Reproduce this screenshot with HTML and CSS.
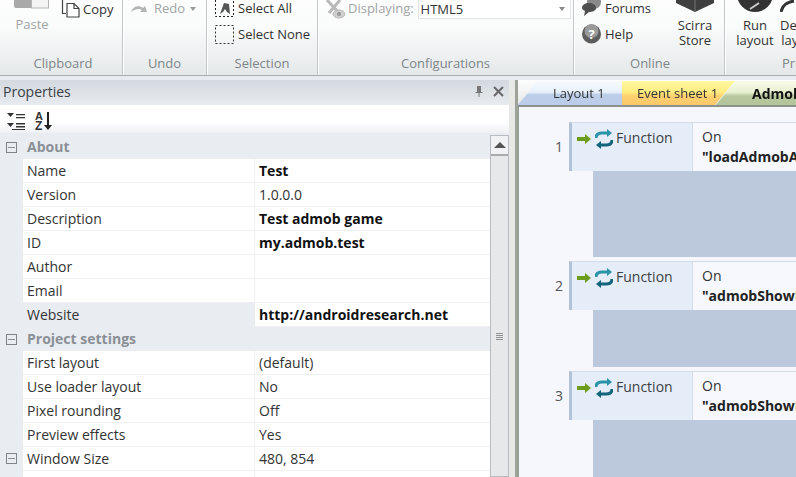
FILE: index.html
```html
<!DOCTYPE html>
<html lang="en">
<head>
<meta charset="utf-8">
<title>Construct 2</title>
<link rel="stylesheet" href="styles.css">
</head>
<body>
<div class="app">
  <header class="ribbon">
    <section class="group g-clip">
      <div class="tools clip-tools">
        <div class="paste">
          <svg class="paste-ico" width="36" height="9" viewBox="0 0 36 9"><rect x="0" y="-6" width="20" height="14" rx="2" fill="#a9a9a9"/><rect x="17.500" y="-6" width="17" height="14" fill="#f4f4f4" stroke="#b5b5b5"/></svg>
          <span class="muted">Paste</span>
        </div>
        <div class="copy">
          <svg width="19" height="18" viewBox="0 0 19 18" fill="none" stroke="#444" stroke-width="1.200"><path d="M5 -2H1.500V13.500H5"/><path d="M6 3.500H13L18 8.500V17H6Z" fill="#fff"/><path d="M13 3.500V8.500H18"/></svg>
          <span>Copy</span>
        </div>
      </div>
      <div class="glabel">Clipboard</div>
    </section>
    <section class="group g-undo">
      <div class="tools redo">
        <svg width="20" height="10" viewBox="0 0 20 10"><path d="M1 9c2-6 8-7 12-4l2-2 2 6h-7l2-2c-3-2-7-1-11 2z" fill="#b3b3b3"/></svg>
        <span class="muted">Redo</span>
        <i class="caret"></i>
      </div>
      <div class="glabel">Undo</div>
    </section>
    <section class="group g-sel">
      <div class="tools sel-tools">
        <div class="line-item">
          <svg class="sel-all-ico" width="21" height="18" viewBox="0 0 21 18"><path d="M1.500 0v16.500h18V0" fill="none" stroke="#222" stroke-dasharray="2 2"/><path d="M6 14l4-11 5 1 1 10-3-2-2-3-2 3z" fill="#555"/></svg>
          <span>Select All</span>
        </div>
        <div class="line-item">
          <svg width="21" height="20" viewBox="0 0 21 20"><rect x="1.500" y="1.500" width="18" height="18" fill="none" stroke="#333" stroke-dasharray="2 2"/></svg>
          <span>Select None</span>
        </div>
      </div>
      <div class="glabel">Selection</div>
    </section>
    <section class="group g-conf">
      <div class="tools conf-tools">
        <svg width="21" height="20" viewBox="0 0 21 20" fill="none" stroke="#b9b9b9" stroke-width="3"><path d="M2 0l13 14M15 0L4 13"/><ellipse cx="14" cy="14" rx="6" ry="4" fill="#cfcfcf" stroke-width="1"/><circle cx="14" cy="14" r="2" fill="#999" stroke="none"/></svg>
        <span class="muted disp">Displaying:</span>
        <div class="select"><span>HTML5</span><i class="caret"></i></div>
      </div>
      <div class="glabel">Configurations</div>
    </section>
    <section class="group g-online">
      <div class="tools online-tools">
        <div class="online-col">
          <div class="line-item">
            <svg width="21" height="18" viewBox="0 0 21 18"><circle cx="13" cy="3" r="7" fill="#8a8a8a"/><path d="M1 9c0-3 3-5 7-5s7 2 7 5-4 4-7 4l-5 4 1-5c-2-1-3-2-3-3z" fill="#4f4f4f"/></svg>
            <span>Forums</span>
          </div>
          <div class="line-item">
            <svg width="21" height="20" viewBox="0 0 21 20"><circle cx="10.500" cy="10" r="9.500" fill="#5d5d5d"/><circle cx="10.500" cy="7" r="7" fill="#9a9a9a"/><text x="10.500" y="15" text-anchor="middle" class="qmark">?</text></svg>
            <span>Help</span>
          </div>
        </div>
        <div class="big-btn store">
          <svg width="38" height="12" viewBox="0 0 38 12"><path d="M0 -4h38v7L19 12 0 3z" fill="#3f3f3f"/><path d="M19 0v12" stroke="#777"/></svg>
          <span>Scirra<br>Store</span>
        </div>
      </div>
      <div class="glabel">Online</div>
    </section>
    <section class="group g-prev">
      <div class="tools prev-tools">
        <div class="big-btn run">
          <svg width="36" height="12" viewBox="0 0 36 12"><circle cx="18" cy="-6" r="18" fill="#333"/><path d="M13 9l9-6" stroke="#ccc" stroke-width="2"/></svg>
          <span>Run<br>layout</span>
        </div>
        <div class="big-btn debug">
          <svg width="20" height="12" viewBox="0 0 20 12"><path d="M1 12C2 6 7 2 14 1" fill="none" stroke="#333" stroke-width="3"/></svg>
          <span>Debug<br>layout</span>
        </div>
      </div>
      <div class="glabel glabel-prev">Preview</div>
    </section>
  </header>

  <main class="main">
    <aside class="props">
      <div class="props-head">
        <span>Properties</span>
        <div class="head-icons">
          <svg width="10" height="11" viewBox="0 0 10 11" fill="#777"><path d="M3 0h4v6h1.500v1H5.500v4h-1V7H1.500V6H3z"/></svg>
          <svg width="11" height="11" viewBox="0 0 11 11" stroke="#666" stroke-width="2"><path d="M1 1l9 9M10 1l-9 9"/></svg>
        </div>
      </div>
      <div class="props-tools">
        <svg width="20" height="18" viewBox="0 0 20 18" fill="#333"><path d="M1 1h7L4.500 5zM1 11h7l-3.500 4z"/><path d="M10 2h9v1.200h-9zM10 5h9v1.200h-9zM10 11h9v1.500h-9zM10 14h9v1.500h-9zM6 17h13v1H6z"/></svg>
        <svg class="az" width="18" height="18" viewBox="0 0 18 18"><text x="0" y="8" class="az-a">A</text><text x="0" y="18" class="az-z">Z</text><path d="M12 0h2v13h3l-4 5-4-5h3z" fill="#222"/></svg>
      </div>
      <div class="grid-wrap">
        <div class="grid">
          <div class="cat"><i class="exp"></i><b>About</b></div>
          <div class="row"><div class="k">Name</div><div class="v"><b>Test</b></div></div>
          <div class="row"><div class="k">Version</div><div class="v">1.0.0.0</div></div>
          <div class="row"><div class="k">Description</div><div class="v"><b>Test admob game</b></div></div>
          <div class="row"><div class="k">ID</div><div class="v"><b>my.admob.test</b></div></div>
          <div class="row"><div class="k">Author</div><div class="v"></div></div>
          <div class="row"><div class="k">Email</div><div class="v"></div></div>
          <div class="row sel"><div class="k">Website</div><div class="v"><b>http://androidresearch.net</b></div></div>
          <div class="cat"><i class="exp"></i><b>Project settings</b></div>
          <div class="row"><div class="k">First layout</div><div class="v">(default)</div></div>
          <div class="row"><div class="k">Use loader layout</div><div class="v">No</div></div>
          <div class="row"><div class="k">Pixel rounding</div><div class="v">Off</div></div>
          <div class="row"><div class="k">Preview effects</div><div class="v">Yes</div></div>
          <div class="row has-exp"><i class="exp"></i><div class="k">Window Size</div><div class="v">480, 854</div></div>
          <div class="row"><div class="k"></div><div class="v"></div></div>
        </div>
        <div class="scrollbar">
          <div class="sb-up"><i></i></div>
          <div class="sb-thumb"><div class="grip"></div></div>
        </div>
      </div>
    </aside>
    <div class="splitter"></div>
    <section class="editor">
      <nav class="tabs">
        <div class="tab t-layout"><span>Layout 1</span></div>
        <div class="tab t-sheet"><span>Event sheet 1</span></div>
        <div class="tab t-admob"><b>Admob</b></div>
      </nav>
      <div class="sheet">
        <div class="event">
          <div class="ev-row">
            <div class="num">1</div>
            <div class="cond">
              <svg width="15" height="10" viewBox="0 0 15 10"><path d="M0 3h8V0l6 5-6 5V7H0z" fill="#6c9c1e"/></svg>
              <svg class="loop" width="18" height="20" viewBox="0 0 18 20" fill="none" stroke-width="3"><path d="M1 9c0-4 3-5 6-5h6" stroke="#2a93a8"/><path d="M12 0l5 4-5 4z" fill="#2a93a8"/><path d="M17 11c0 4-3 5-6 5H5" stroke="#13657c"/><path d="M6 12l-5 4 5 4z" fill="#13657c"/></svg>
              <span>Function</span>
            </div>
            <div class="act">On<br><b>"loadAdmobAds"</b></div>
          </div>
          <div class="sub s1"></div>
        </div>
        <div class="event">
          <div class="ev-row">
            <div class="num">2</div>
            <div class="cond">
              <svg width="15" height="10" viewBox="0 0 15 10"><path d="M0 3h8V0l6 5-6 5V7H0z" fill="#6c9c1e"/></svg>
              <svg class="loop" width="18" height="20" viewBox="0 0 18 20" fill="none" stroke-width="3"><path d="M1 9c0-4 3-5 6-5h6" stroke="#2a93a8"/><path d="M12 0l5 4-5 4z" fill="#2a93a8"/><path d="M17 11c0 4-3 5-6 5H5" stroke="#13657c"/><path d="M6 12l-5 4 5 4z" fill="#13657c"/></svg>
              <span>Function</span>
            </div>
            <div class="act">On<br><b>"admobShowBanner"</b></div>
          </div>
          <div class="sub s2"></div>
        </div>
        <div class="event">
          <div class="ev-row">
            <div class="num">3</div>
            <div class="cond">
              <svg width="15" height="10" viewBox="0 0 15 10"><path d="M0 3h8V0l6 5-6 5V7H0z" fill="#6c9c1e"/></svg>
              <svg class="loop" width="18" height="20" viewBox="0 0 18 20" fill="none" stroke-width="3"><path d="M1 9c0-4 3-5 6-5h6" stroke="#2a93a8"/><path d="M12 0l5 4-5 4z" fill="#2a93a8"/><path d="M17 11c0 4-3 5-6 5H5" stroke="#13657c"/><path d="M6 12l-5 4 5 4z" fill="#13657c"/></svg>
              <span>Function</span>
            </div>
            <div class="act">On<br><b>"admobShowInter"</b></div>
          </div>
          <div class="sub s3"></div>
        </div>
      </div>
    </section>
  </main>
</div>
</body>
</html>
```
FILE: styles.css
```css
* { box-sizing: border-box; }
html, body { margin: 0; height: 100%; overflow: hidden; }
body { font-family: "Open Sans", "Noto Sans", sans-serif; font-size: 14px; color: #333; }
.app { width: 796px; height: 477px; display: flex; flex-direction: column; overflow: hidden; background: #e9ecee; }
b { font-weight: 700; color: #111; }
svg { display: block; flex: none; overflow: hidden; }

.ribbon { height: 76px; flex: none; display: flex; overflow: hidden; font-size: 13px; border-bottom: 1px solid #a7abad; background: linear-gradient(#fdfdfd, #fafbfb 35%, #e5e8e9); }
.group { height: 75px; flex: none; display: flex; flex-direction: column; justify-content: flex-end; border-right: 1px solid #c3c7c9; box-shadow: 1px 0 0 #fff; }
.g-clip { width: 123px; }
.g-undo { width: 84px; }
.g-sel { width: 111px; }
.g-conf { width: 256px; }
.g-online { width: 151px; }
.g-prev { flex: 1; border-right: 0; box-shadow: none; }
.glabel { height: 25px; flex: none; text-align: center; color: #7d8589; line-height: 26px; }
.g-clip .glabel { padding-left: 4px; }
.g-online .glabel { padding-left: 2px; }
.glabel-prev { text-align: left; padding-left: 57px; white-space: nowrap; }
.tools { flex: none; }
.muted { color: #a2a5a6; }

.clip-tools { height: 50px; display: flex; }
.paste { width: 61px; display: flex; flex-direction: column; align-items: center; padding-left: 3px; }
.paste-ico { margin-bottom: 6px; }
.copy { display: flex; gap: 3px; height: 17px; align-items: center; }

.redo { height: 50px; display: flex; align-items: flex-start; padding: 0 0 0 7px; gap: 4px; }
.redo svg { margin-top: 3px; }
.redo span { line-height: 17px; }
.redo .caret { margin: 7px 0 0 1px; }
.caret { display: block; flex: none; border: 3px solid transparent; border-top: 4px solid #9a9a9a; border-bottom: 0; width: 0; height: 0; }

.sel-tools { height: 50px; padding: 0 0 0 7px; display: flex; flex-direction: column; gap: 8px; }
.line-item { display: flex; gap: 3px; align-items: center; height: 20px; }
.line-item:first-child { height: 16px; }
.sel-all-ico { margin-top: 1px; }

.conf-tools { height: 50px; display: flex; align-items: flex-start; padding-left: 7px; }
.disp { margin-left: 2px; line-height: 17px; }
.select { width: 153px; height: 20px; margin-left: 4px; margin-top: -1px; background: #fff; border: 1px solid #e3e5e6; display: flex; align-items: center; justify-content: space-between; padding: 0 5px 0 2px; }
.select .caret { border-top-color: #888; }

.online-tools { height: 50px; display: flex; padding-left: 7px; }
.online-col { width: 95px; display: flex; flex-direction: column; gap: 8px; }
.big-btn { display: flex; flex-direction: column; align-items: center; text-align: center; line-height: 15px; }
.big-btn svg { margin-bottom: 6px; }
.store { width: 38px; }
.qmark { font: 700 13px "Open Sans", sans-serif; fill: #fff; }

.prev-tools { height: 50px; display: flex; padding-left: 12px; }
.run { width: 36px; }
.debug { width: 30px; margin-left: 5px; align-items: flex-start; padding-left: 2px; }

.main { flex: 1; display: flex; min-height: 0; padding-top: 4px; }
.props { width: 509px; flex: none; display: flex; flex-direction: column; background: #e9ecf1; }
.props-head { height: 25px; flex: none; display: flex; align-items: center; justify-content: space-between; padding: 0 5px 2px 3px; background: linear-gradient(#d3d9df, #e8ebef); color: #3a4046; }
.head-icons { display: flex; gap: 9px; align-items: center; }
.props-tools { height: 28px; flex: none; display: flex; gap: 9px; padding: 7px 0 0 6px; background: linear-gradient(#fff, #fff 60%, #eef0f3); }
.az-a, .az-z { font: 700 11px "Liberation Sans", sans-serif; fill: #333; }
.az-z { font-size: 12px; }

.grid-wrap { flex: 1; display: flex; min-height: 0; padding-top: 2px; }
.grid { width: 490px; flex: none; overflow: hidden; }
.cat { height: 24px; display: flex; align-items: center; }
.cat b { color: #8a8f96; margin-top: -2px; }
.exp { display: block; width: 11px; height: 11px; margin: 0 10px 0 6px; flex: none; border: 1px solid #7f858b; background: linear-gradient(#8a9097, #8a9097) center / 7px 1px no-repeat; }
.row { height: 24px; display: flex; padding-left: 23px; }
.k { width: 232px; flex: none; background: #fff; border-bottom: 1px solid #eef0f2; border-right: 1px solid #eef0f2; padding-left: 4px; line-height: 23px; }
.v { flex: 1; background: #fff; border-bottom: 1px solid #eef0f2; padding-left: 4px; line-height: 23px; }
.sel .k { background: #e9ecf1; border-color: #e9ecf1; }
.has-exp { padding-left: 0; }
.has-exp .exp { margin: 6px 6px 0 6px; }
.scrollbar { width: 19px; flex: none; display: flex; flex-direction: column; border: 1px solid #b9bcbf; background: #e7e8e9; }
.sb-up { height: 20px; flex: none; border-bottom: 2px solid #a9acae; background: #f1f2f3; display: flex; align-items: center; justify-content: center; }
.sb-up i { display: block; border: 6px solid transparent; border-bottom: 6px solid #555; border-top: 0; }
.sb-thumb { flex: 1; padding-top: 177px; }
.grip { width: 7px; height: 7px; margin: 0 auto; background: repeating-linear-gradient(#8e9194 0 1px, transparent 1px 2px); }

.splitter { width: 9px; flex: none; background: #e7e9e6; border-right: 3px solid #9ea39a; }
.editor { flex: 1; min-width: 0; display: flex; flex-direction: column; background: #eceeec; }
.tabs { height: 27px; flex: none; display: flex; padding-top: 1px; overflow: hidden; font-size: 13px; background: linear-gradient(#fdfdfd, #e6e8e8); border-bottom: 2px solid #8d918c; }
.tab { height: 25px; flex: none; display: flex; align-items: center; line-height: 1; filter: drop-shadow(0 0 .6px #777); }
.t-layout { width: 105px; margin-left: -1px; padding-left: 36px; clip-path: polygon(0 100%, 21px 0, 100% 0, 100% 100%); background: linear-gradient(#f8fbfe, #e6f0fa 45%, #bccdea 55%, #bccdea); }
.t-sheet { width: 113px; padding-left: 15px; clip-path: polygon(0 0, 100% 0, calc(100% - 21px) 100%, 0 100%); background: linear-gradient(#fff9a3, #ffec7e 45%, #fdd06e 60%, #fcc86a); }
.t-admob { width: 100px; margin-left: -20px; padding-left: 37px; font-size: 14px; white-space: nowrap; clip-path: polygon(21px 0, 100% 0, 100% 100%, 0 100%); background: linear-gradient(#f8fbe9, #e8f0d2 45%, #b9c99f 60%, #b4c49a); }

.sheet { flex: 1; min-height: 0; overflow: hidden; background: #f6f7fc; border-left: 1px solid #97a097; padding-top: 15px; display: flex; flex-direction: column; gap: 4px; }
.event { flex: none; }
.ev-row { height: 49px; display: flex; white-space: nowrap; }
.num { width: 50px; flex: none; text-align: right; padding-right: 6px; line-height: 50px; color: #555; }
.cond { width: 124px; flex: none; display: flex; align-items: flex-start; padding: 6px 0 0 5px; background: #e5edf8; border: 0 solid #d3dbe6; border-width: 1px 1px 0 0; border-left: 3px solid #b3c2d6; color: #3b3f44; }
.cond svg { margin-top: 5px; }
.cond .loop { margin: 0 0 0 3px; }
.cond span { margin-left: 3px; line-height: 17px; }
.act { flex: 1; min-width: 0; overflow: hidden; padding: 4px 0 0 9px; line-height: 20px; background: #f6f8fd; border-top: 1px solid #d3dbe6; }
.act b { color: #222; }
.sub { margin-left: 74px; background: #bcc9dc; }
.s1 { height: 86px; }
.s2 { height: 57px; }
.s3 { height: 70px; }
```
